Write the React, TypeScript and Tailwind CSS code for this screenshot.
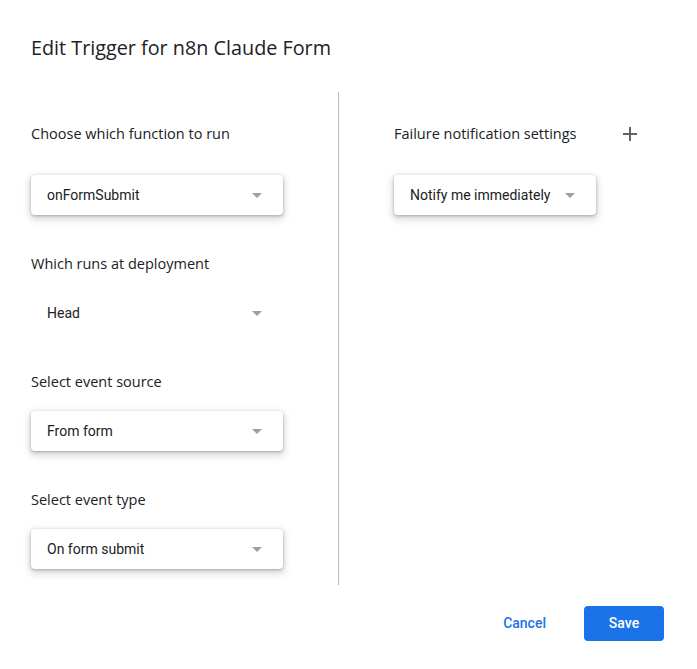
import React from "react";

const Arrow = () => (
  <svg width="10" height="5" viewBox="0 0 10 5" className="shrink-0">
    <path d="M0 0 L10 0 L5 5 Z" fill="#9e9e9e" />
  </svg>
);

function Dropdown({ text, boxed = true, width = "w-[252px]" }: { text: string; boxed?: boolean; width?: string }) {
  return (
    <div
      className={`${width} h-[40px] flex items-center justify-between pl-[16px] pr-[21px] rounded-[4px] bg-white ${
        boxed ? "shadow-[0_1px_3px_0_rgba(60,64,67,0.35),0_3px_7px_2px_rgba(60,64,67,0.18)]" : ""
      }`}
    >
      <span className="text-[14px] text-[#202124]" style={{ fontFamily: "Roboto, sans-serif" }}>
        {text}
      </span>
      <Arrow />
    </div>
  );
}

function Label({ children }: { children: React.ReactNode }) {
  return (
    <div className="h-[20px] flex items-center text-[14.5px] text-[#202124]" style={{ fontFamily: "'Open Sans', sans-serif" }}>
      {children}
    </div>
  );
}

export default function App() {
  return (
    <div className="w-[697px] h-[669px] bg-white relative" style={{ fontFamily: "'Open Sans', sans-serif" }}>
      <div className="pt-[34px] pl-[31px] h-[92px]">
        <h1 className="text-[19.8px] leading-[28px] text-[#202124]">Edit Trigger for n8n Claude Form</h1>
      </div>
      <div className="flex h-[493px]">
        <div className="w-[338px] pl-[31px] pt-[32px] flex flex-col">
          <Label>Choose which function to run</Label>
          <div className="mt-[31px]">
            <Dropdown text="onFormSubmit" />
          </div>
          <div className="mt-[39px]">
            <Label>Which runs at deployment</Label>
          </div>
          <div className="mt-[19px]">
            <Dropdown text="Head" boxed={false} />
          </div>
          <div className="mt-[39px]">
            <Label>Select event source</Label>
          </div>
          <div className="mt-[19px]">
            <Dropdown text="From form" />
          </div>
          <div className="mt-[39px]">
            <Label>Select event type</Label>
          </div>
          <div className="mt-[19px]">
            <Dropdown text="On form submit" />
          </div>
        </div>
        <div className="w-px bg-[#bdbdbd]" />
        <div className="flex-1 pl-[55px] pt-[32px] pr-[60px] flex flex-col">
          <div className="flex items-center justify-between">
            <Label>Failure notification settings</Label>
            <svg width="14" height="14" viewBox="0 0 14 14">
              <path d="M7 0 V14 M0 7 H14" stroke="#5f6368" strokeWidth="2" />
            </svg>
          </div>
          <div className="mt-[31px]">
            <Dropdown text="Notify me immediately" width="w-[202px]" />
          </div>
        </div>
      </div>
      <div className="flex justify-end items-center gap-[16px] pr-[33px] pt-[21px]">
        <button className="h-[35px] px-[22px] text-[14px] text-[#1a73e8] font-medium" style={{ fontFamily: "Roboto, sans-serif" }}>
          Cancel
        </button>
        <button className="h-[35px] w-[80px] rounded-[4px] bg-[#1a73e8] text-white text-[14px] font-medium" style={{ fontFamily: "Roboto, sans-serif" }}>
          Save
        </button>
      </div>
    </div>
  );
}
